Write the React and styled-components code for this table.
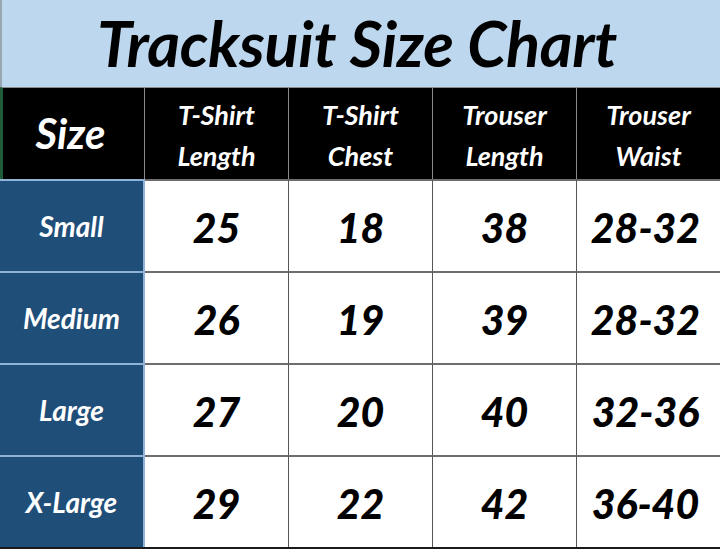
import styled, { createGlobalStyle } from "styled-components";

const GlobalStyle = createGlobalStyle`
  html, body {
    margin: 0;
    padding: 0;
    background: #1a1a1a;
  }
  body {
    font-family: "Lato", "Open Sans", sans-serif;
  }
`;

const Chart = styled.div`
  width: 720px;
  height: 549px;
  display: flex;
  flex-direction: column;
  overflow: hidden;
  background: #1a1a1a;
`;

const Title = styled.h1`
  margin: 0;
  height: 87px;
  flex: none;
  box-sizing: border-box;
  background: #bdd7ee;
  border-left: 2px solid #9aa6b0;
  display: flex;
  align-items: center;
  justify-content: center;
  font-size: 63px;
  font-weight: 700;
  font-style: italic;
  color: #000;
  letter-spacing: -0.3px;
  padding-bottom: 3px;
  padding-right: 8px;
`;

const Grid = styled.div`
  display: grid;
  grid-template-columns: 145px 144px 144px 144px 143px;
  grid-template-rows: repeat(5, 92px);
`;

const HeadCell = styled.div`
  box-sizing: border-box;
  background: #000;
  color: #fff;
  display: flex;
  flex-direction: column;
  align-items: center;
  justify-content: center;
  font-style: italic;
  font-weight: 700;
  font-size: ${(p) => (p.$big ? "42px" : "27px")};
  line-height: 41px;
  border-right: ${(p) => (p.$last ? "0" : "1px solid #8a8a8a")};
  border-left: ${(p) => (p.$first ? "3px solid #1e5c3a" : "0")};
  border-top: 1px solid #8a8a8a;
  padding-top: ${(p) => (p.$big ? "0" : "2px")};
  padding-right: ${(p) => (p.$big ? "6px" : "0")};
`;

const SizeCell = styled.div`
  box-sizing: border-box;
  background: #1f4e79;
  color: #fff;
  display: flex;
  align-items: center;
  justify-content: center;
  font-style: italic;
  font-weight: 700;
  font-size: 28px;
  border-right: 2px solid #8fb4d8;
  border-top: 2px solid #8fb4d8;
`;

const ValueCell = styled.div`
  box-sizing: border-box;
  background: #fff;
  color: #000;
  display: flex;
  align-items: center;
  justify-content: center;
  font-style: italic;
  font-weight: 900;
  font-size: 41px;
  border-right: ${(p) => (p.$last ? "0" : "1px solid #555")};
  border-top: 2px solid #6d6d6d;
  padding-top: 2px;
  padding-right: ${(p) => (p.$last ? "6px" : "0")};
`;

const headers = [
  ["T-Shirt", "Length"],
  ["T-Shirt", "Chest"],
  ["Trouser", "Length"],
  ["Trouser", "Waist"],
];

const rows = [
  { size: "Small", values: ["25", "18", "38", "28-32"] },
  { size: "Medium", values: ["26", "19", "39", "28-32"] },
  { size: "Large", values: ["27", "20", "40", "32-36"] },
  { size: "X-Large", values: ["29", "22", "42", "36-40"] },
];

export default function App() {
  return (
    <>
      <GlobalStyle />
      <Chart>
        <Title>Tracksuit Size Chart</Title>
        <Grid>
          <HeadCell $big $first>Size</HeadCell>
          {headers.map((h, i) => (
            <HeadCell key={i} $last={i === headers.length - 1}>
              <span>{h[0]}</span>
              <span>{h[1]}</span>
            </HeadCell>
          ))}
          {rows.map((row) => (
            <>
              <SizeCell key={row.size}>{row.size}</SizeCell>
              {row.values.map((v, i) => (
                <ValueCell key={row.size + i} $last={i === row.values.length - 1}>
                  {v}
                </ValueCell>
              ))}
            </>
          ))}
        </Grid>
      </Chart>
    </>
  );
}
